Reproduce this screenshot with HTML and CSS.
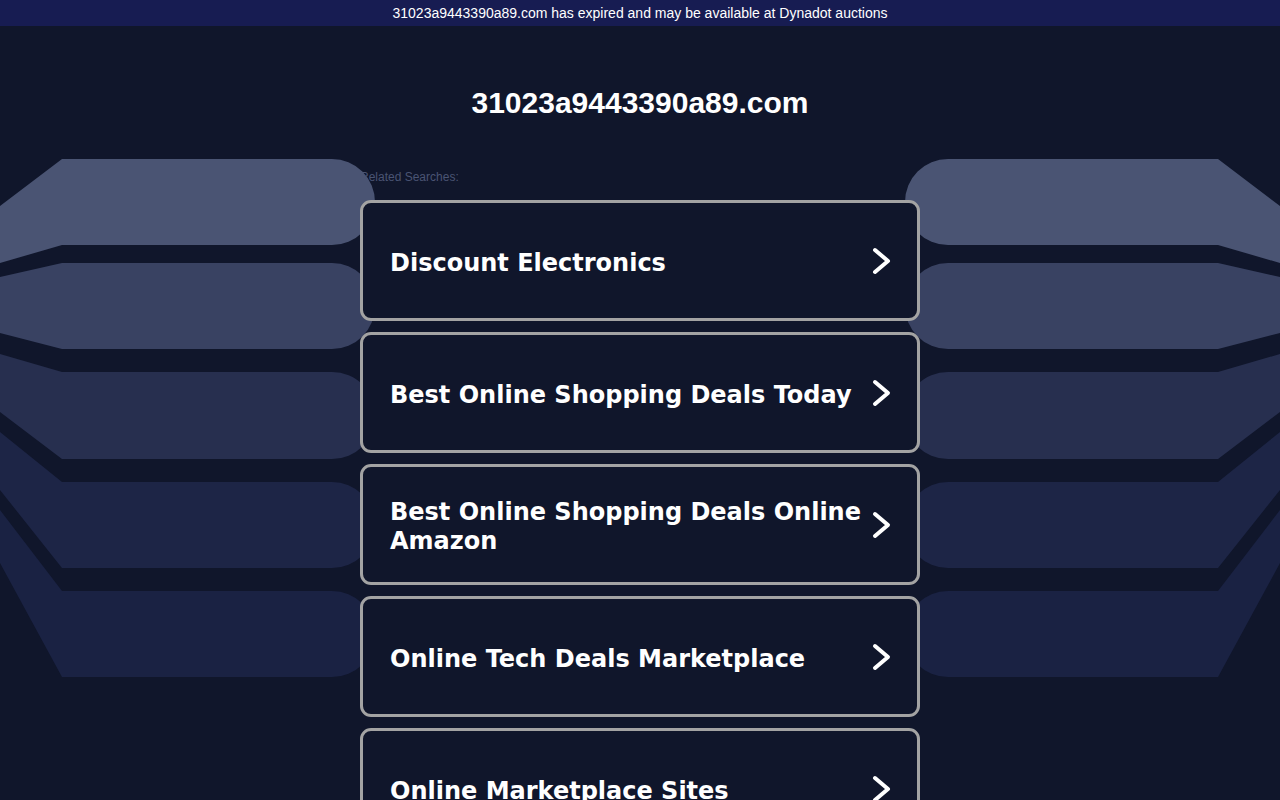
FILE: index.html
```html
<!DOCTYPE html>
<html lang="en">
<head>
<meta charset="utf-8">
<title>31023a9443390a89.com</title>
<link rel="stylesheet" href="styles.css">
</head>
<body>
<div class="topbar">31023a9443390a89.com has expired and may be available at Dynadot auctions</div>
<svg class="bg" viewBox="0 0 1280 800" width="1280" height="800" aria-hidden="true">
  <g>
    <path fill="#4a5473" d="M0,206 L62,159 L332,159 A43,43 0 0 1 332,245 L62,245 L0,263 Z"/>
    <path fill="#394262" d="M0,277 L62,263 L332,263 A43,43 0 0 1 332,349 L62,349 L0,333 Z"/>
    <path fill="#272f4f" d="M0,354 L62,372 L332,372 A43.5,43.5 0 0 1 332,459 L62,459 L0,412 Z"/>
    <path fill="#1d2546" d="M0,432 L62,482 L332,482 A43,43 0 0 1 332,568 L62,568 L0,490 Z"/>
    <path fill="#1a2243" d="M0,510 L62,591 L332,591 A43,43 0 0 1 332,677 L62,677 L0,563 Z"/>
  </g>
  <g transform="translate(1280,0) scale(-1,1)">
    <path fill="#4a5473" d="M0,206 L62,159 L332,159 A43,43 0 0 1 332,245 L62,245 L0,263 Z"/>
    <path fill="#394262" d="M0,277 L62,263 L332,263 A43,43 0 0 1 332,349 L62,349 L0,333 Z"/>
    <path fill="#272f4f" d="M0,354 L62,372 L332,372 A43.5,43.5 0 0 1 332,459 L62,459 L0,412 Z"/>
    <path fill="#1d2546" d="M0,432 L62,482 L332,482 A43,43 0 0 1 332,568 L62,568 L0,490 Z"/>
    <path fill="#1a2243" d="M0,510 L62,591 L332,591 A43,43 0 0 1 332,677 L62,677 L0,563 Z"/>
  </g>
</svg>
<main class="main">
  <h1 class="title">31023a9443390a89.com</h1>
  <div class="label">Related Searches:</div>
  <ul class="list">
    <li class="card"><span class="card-text">Discount Electronics</span><svg class="chev" viewBox="0 0 20 28" width="20" height="28"><polyline points="3,3 16,14 3,25"/></svg></li>
    <li class="card"><span class="card-text">Best Online Shopping Deals Today</span><svg class="chev" viewBox="0 0 20 28" width="20" height="28"><polyline points="3,3 16,14 3,25"/></svg></li>
    <li class="card"><span class="card-text">Best Online Shopping Deals Online Amazon</span><svg class="chev" viewBox="0 0 20 28" width="20" height="28"><polyline points="3,3 16,14 3,25"/></svg></li>
    <li class="card"><span class="card-text">Online Tech Deals Marketplace</span><svg class="chev" viewBox="0 0 20 28" width="20" height="28"><polyline points="3,3 16,14 3,25"/></svg></li>
    <li class="card"><span class="card-text">Online Marketplace Sites</span><svg class="chev" viewBox="0 0 20 28" width="20" height="28"><polyline points="3,3 16,14 3,25"/></svg></li>
  </ul>
</main>
</body>
</html>
```

FILE: styles.css
```css
html, body {
  margin: 0;
  padding: 0;
  background: #10162b;
  overflow: hidden;
}
body {
  font-family: "Liberation Sans", Arial, sans-serif;
  color: #ffffff;
  height: 800px;
}
.topbar {
  height: 26px;
  line-height: 26px;
  background: #171c52;
  color: #ffffff;
  font-size: 14px;
  text-align: center;
}
.bg {
  position: absolute;
  top: 0;
  left: 0;
  z-index: 0;
}
.main {
  width: 560px;
  margin: 0 auto;
}
.title {
  margin: 58px 0 0 0;
  font-size: 30px;
  line-height: 38px;
  font-weight: bold;
  text-align: center;
}
.label {
  margin-top: 48px;
  font-size: 12px;
  line-height: 14px;
  color: #4a5473;
}
.list {
  list-style: none;
  margin: 16px 0 0 0;
  padding: 0;
}
.card {
  position: relative;
  z-index: 1;
  box-sizing: border-box;
  height: 121px;
  margin-bottom: 11px;
  border: 3px solid #a3a3a3;
  border-radius: 11px;
  background: #10162b;
  display: flex;
  align-items: center;
  justify-content: space-between;
  padding: 0 25px 0 27px;
}
.card-text {
  font-family: "DejaVu Sans", Verdana, sans-serif;
  font-weight: bold;
  font-size: 24px;
  line-height: 29px;
  padding-top: 5px;
  color: #ffffff;
}
.chev {
  flex: none;
  margin-left: 8px;
}
.chev polyline {
  fill: none;
  stroke: #ffffff;
  stroke-width: 4;
  stroke-linecap: round;
  stroke-linejoin: round;
}
```
